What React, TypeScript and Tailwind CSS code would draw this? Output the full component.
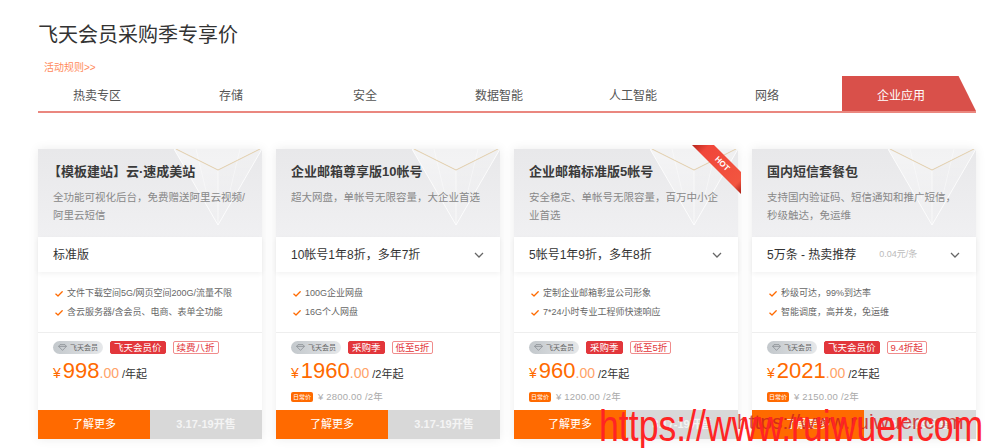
import React from "react";

type Card = {
  title: string;
  desc: string[];
  select: string;
  note?: string;
  chevron: boolean;
  features: string[];
  badges: [string, string];
  price: string;
  unit: string;
  regular?: string;
  hot?: boolean;
};

const cards: Card[] = [
  {
    title: "【模板建站】云·速成美站",
    desc: ["全功能可视化后台，免费赠送阿里云视频/", "阿里云短信"],
    select: "标准版",
    chevron: false,
    features: ["文件下载空间5G/网页空间200G/流量不限", "含云服务器/含会员、电商、表单全功能"],
    badges: ["飞天会员价", "续费八折"],
    price: "998",
    unit: "/年起",
  },
  {
    title: "企业邮箱尊享版10帐号",
    desc: ["超大网盘，单帐号无限容量，大企业首选"],
    select: "10帐号1年8折，多年7折",
    chevron: true,
    features: ["100G企业网盘", "16G个人网盘"],
    badges: ["采购季", "低至5折"],
    price: "1960",
    unit: "/2年起",
    regular: "¥ 2800.00 /2年",
  },
  {
    title: "企业邮箱标准版5帐号",
    desc: ["安全稳定、单帐号无限容量，百万中小企", "业首选"],
    select: "5帐号1年9折，多年8折",
    chevron: true,
    features: ["定制企业邮箱彰显公司形象", "7*24小时专业工程师快速响应"],
    badges: ["采购季", "低至5折"],
    price: "960",
    unit: "/2年起",
    regular: "¥ 1200.00 /2年",
    hot: true,
  },
  {
    title: "国内短信套餐包",
    desc: ["支持国内验证码、短信通知和推广短信，", "秒级触达，免运维"],
    select: "5万条 - 热卖推荐",
    note: "0.04元/条",
    chevron: true,
    features: ["秒级可达，99%到达率", "智能调度，高并发，免运维"],
    badges: ["飞天会员价", "9.4折起"],
    price: "2021",
    unit: "/2年起",
    regular: "¥ 2150.00 /2年",
  },
];

const tabs = ["热卖专区", "存储", "安全", "数据智能", "人工智能", "网络", "企业应用"];

function Deco() {
  return (
    <svg width="88" height="76" viewBox="0 0 88 76" className="absolute right-0 top-0">
      <defs>
        <linearGradient id="lf" x1="0" y1="0" x2="0" y2="1">
          <stop offset="0" stopColor="#ffffff" stopOpacity="0.55" />
          <stop offset="1" stopColor="#ffffff" stopOpacity="0" />
        </linearGradient>
        <linearGradient id="rf" x1="0" y1="0" x2="0" y2="1">
          <stop offset="0" stopColor="#ffffff" stopOpacity="0.35" />
          <stop offset="1" stopColor="#ffffff" stopOpacity="0" />
        </linearGradient>
      </defs>
      <polygon points="0,0 88,0 44,21" fill="#ffffff" fillOpacity="0.45" />
      <polygon points="0,0 44,21 44,76" fill="url(#lf)" />
      <polygon points="88,0 44,21 44,76" fill="url(#rf)" />
      <line x1="0" y1="0" x2="44" y2="76" stroke="#ffffff" strokeOpacity="0.8" strokeWidth="1" />
      <line x1="88" y1="0" x2="44" y2="76" stroke="#ffffff" strokeOpacity="0.8" strokeWidth="1" />
      <line x1="44" y1="21" x2="44" y2="76" stroke="#ffffff" strokeOpacity="0.6" strokeWidth="1" />
      <line x1="22" y1="0" x2="34" y2="50" stroke="#ffffff" strokeOpacity="0.4" strokeWidth="1" />
      <line x1="66" y1="0" x2="54" y2="50" stroke="#ffffff" strokeOpacity="0.4" strokeWidth="1" />
      <polyline points="2,0 44,21 86,0" fill="none" stroke="#dcc293" strokeWidth="1" strokeOpacity="0.75" />
    </svg>
  );
}

function Hot() {
  return (
    <svg width="58" height="62" viewBox="0 0 58 62" className="absolute -top-[5px] -right-[4px] overflow-visible">
      <defs>
        <linearGradient id="hg" x1="0" y1="0" x2="1" y2="1">
          <stop offset="0" stopColor="#b3241a" />
          <stop offset="0.18" stopColor="#f0463a" />
          <stop offset="0.85" stopColor="#f25540" />
          <stop offset="1" stopColor="#a81d14" />
        </linearGradient>
      </defs>
      <polygon points="8,1 30,1 57,28 57,50" fill="url(#hg)" />
      <text
        x="38"
        y="20"
        transform="rotate(45 38 20)"
        fill="#ffffff"
        fontSize="8"
        fontWeight="bold"
        textAnchor="middle"
        dominantBaseline="middle"
        fontFamily="Liberation Sans, sans-serif"
      >
        HOT
      </text>
    </svg>
  );
}

function Check() {
  return (
    <svg width="8" height="6" viewBox="0 0 8 6" className="shrink-0">
      <path d="M0.8 3.1 L3 5 L7.2 0.8" stroke="#ff6a00" strokeWidth="1.3" fill="none" strokeLinecap="round" strokeLinejoin="round" />
    </svg>
  );
}

function Gem() {
  return (
    <svg width="9" height="7" viewBox="0 0 9 7">
      <path d="M2 0.6 H7 L8.4 2.4 L4.5 6.4 L0.6 2.4 Z M0.6 2.4 H8.4" stroke="#8a8f94" strokeWidth="0.8" fill="none" />
    </svg>
  );
}

function CardView({ c }: { c: Card }) {
  return (
    <div className="relative flex h-[290px] flex-col bg-white shadow-[0_0_10px_rgba(0,0,0,0.08)]">
      <div className="relative h-[88px] overflow-hidden bg-linear-to-b from-[#e8e8ea] to-[#f0f0f2] px-[15px] pt-[14px]">
        <Deco />
        <div className="relative text-[13px] font-bold leading-[18px] text-[#3a3a3a]">
          {c.title.startsWith("【") ? <span className="-ml-[5px]">{c.title}</span> : c.title}
        </div>
        <div className="relative mt-[7px] text-[10.5px] leading-[18px] text-[#888]">
          {c.desc.map((d) => (
            <div key={d}>{d}</div>
          ))}
        </div>
      </div>
      <div className="relative flex h-[35px] items-center bg-white pl-[15px] pr-[16px] text-[12px] text-[#333] shadow-[0_2px_5px_rgba(0,0,0,0.05)]">
        <span>{c.select}</span>
        {c.note && <span className="ml-[23px] text-[9px] text-[#bbb]">{c.note}</span>}
        {c.chevron && (
          <svg width="10" height="6" viewBox="0 0 10 6" className="ml-auto">
            <path d="M1 1 L5 5 L9 1" stroke="#666" strokeWidth="1.3" fill="none" />
          </svg>
        )}
      </div>
      <div className="pb-[10px] pl-[17px] pt-[12px] text-[9px] leading-[19px] text-[#666]">
        {c.features.map((f) => (
          <div key={f} className="flex items-center gap-[4px]">
            <Check />
            <span>{f}</span>
          </div>
        ))}
      </div>
      <div className="h-px bg-[#eeeeee]" />
      <div className="mt-[8px] flex items-center gap-[7px] pl-[15px]">
        <div className="flex h-[13px] w-[50px] items-center justify-center gap-[3px] rounded-full bg-linear-to-r from-[#c3c8cc] to-[#e6e8ea]">
          <Gem />
          <span className="text-[7px] leading-none text-[#666]">飞天会员</span>
        </div>
        <div className="flex h-[13px] items-center rounded-[2px] border border-[#e2363b] bg-[#e2363b] px-[3px] text-[9.5px] leading-none text-white">
          {c.badges[0]}
        </div>
        <div className="flex h-[13px] items-center rounded-[2px] border border-[#f08c8c] px-[3px] text-[9.5px] leading-none text-[#e2363b]">
          {c.badges[1]}
        </div>
      </div>
      <div className="mt-[4px] flex items-baseline pl-[15px] leading-[26px]">
        <span className="mr-[2px] text-[14px] text-[#ff6a00]">¥</span>
        <span className="text-[22px] text-[#ff6a00]">{c.price}</span>
        <span className="text-[14px] text-[#ffa268]">.00</span>
        <span className="ml-[3px] text-[11px] text-[#333]">{c.unit}</span>
      </div>
      {c.regular && (
        <div className="mt-[4px] flex h-[11px] items-center gap-[5px] pl-[15px]">
          <span className="flex h-[10px] w-[22px] items-center justify-center rounded-[2px] bg-[#ff6a00] text-[6px] leading-none text-white">
            日常价
          </span>
          <span className="text-[9.5px] leading-none tracking-[0.2px] text-[#aaa]">{c.regular}</span>
        </div>
      )}
      <div className="mt-auto grid h-[29px] grid-cols-2 text-[11px]">
        <div className="flex items-center justify-center bg-[#ff6a00] text-white">了解更多</div>
        <div className="flex items-center justify-center bg-[#d8d8d8] font-bold text-[#f4f4f4]">3.17-19开售</div>
      </div>
      {c.hot && <Hot />}
    </div>
  );
}

export default function App() {
  return (
    <div className="relative h-[448px] w-[1000px] overflow-hidden bg-white font-['Liberation_Sans','Noto_Sans_CJK_SC',sans-serif]">
      <div className="pl-[38px] pt-[23px]">
        <h1 className="text-[20px] leading-[24px] text-[#333]">飞天会员采购季专享价</h1>
        <div className="ml-[6px] mt-[14px] text-[10px] leading-[14px] text-[#ff8a5c]">活动规则&gt;&gt;</div>
        <div className="mt-[1px] flex w-[938px] border-b-2 border-[#ea877f]">
          {tabs.map((t, i) =>
            i === tabs.length - 1 ? (
              <div
                key={t}
                className="flex h-[35px] w-[134px] items-center justify-center bg-[#d9504a] pr-[16px] pt-[4px] text-[12px] text-white [clip-path:polygon(0_0,87%_0,100%_100%,0_100%)]"
              >
                {t}
              </div>
            ) : (
              <div key={t} className="flex h-[35px] w-[134px] items-center justify-center pr-[16px] pt-[4px] text-[12px] text-[#555]">
                {t}
              </div>
            )
          )}
        </div>
        <div className="mt-[36px] grid w-[938px] grid-cols-4 gap-[14px]">
          {cards.map((c) => (
            <CardView key={c.title} c={c} />
          ))}
        </div>
      </div>
      <div className="absolute left-[737px] top-[411px] whitespace-nowrap text-[21px] leading-none text-[#c81e1e] opacity-80">
        https://www.ruiwuer.com
      </div>
      <div className="absolute left-[599px] top-[404px] origin-left scale-x-[0.81] whitespace-nowrap text-[44px] leading-none text-[#ff2424]">
        https://www.ruiwuer.com
      </div>
    </div>
  );
}
